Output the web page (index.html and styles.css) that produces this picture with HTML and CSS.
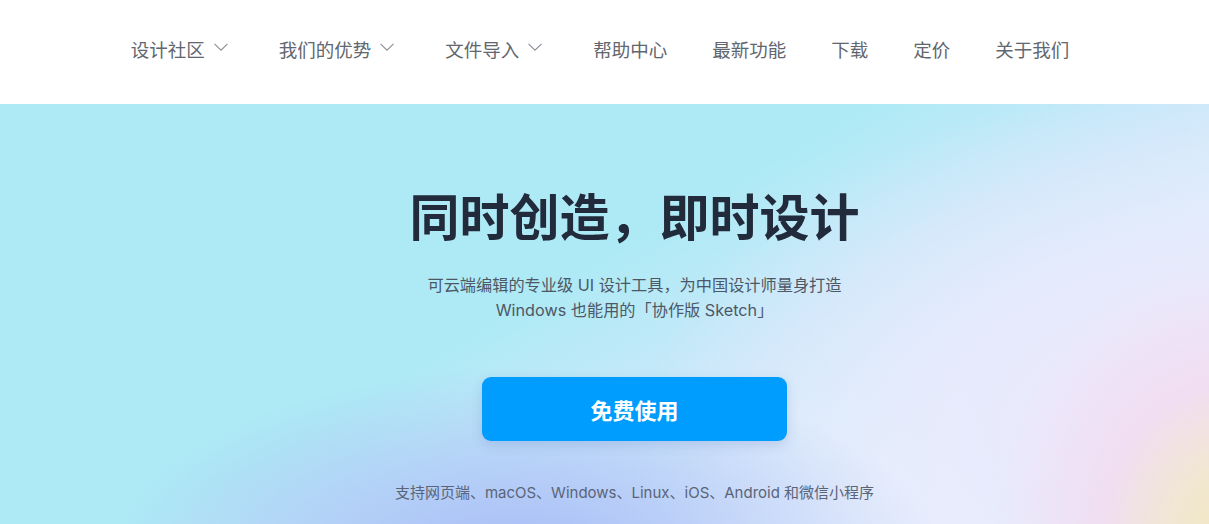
FILE: index.html
```html
<!DOCTYPE html>
<html lang="zh-CN">
<head>
<meta charset="utf-8">
<title>即时设计</title>
<link rel="stylesheet" href="styles.css">
</head>
<body>
<header class="header">
  <nav class="nav">
    <a class="nav-item" href="#">设计社区<svg class="chev" viewBox="0 0 14 8" width="14" height="8"><path d="M0.5 0.8 L7 7.2 L13.5 0.8" fill="none" stroke="#8a8f99" stroke-width="1.1"/></svg></a>
    <a class="nav-item" href="#">我们的优势<svg class="chev" viewBox="0 0 14 8" width="14" height="8"><path d="M0.5 0.8 L7 7.2 L13.5 0.8" fill="none" stroke="#8a8f99" stroke-width="1.1"/></svg></a>
    <a class="nav-item" href="#">文件导入<svg class="chev" viewBox="0 0 14 8" width="14" height="8"><path d="M0.5 0.8 L7 7.2 L13.5 0.8" fill="none" stroke="#8a8f99" stroke-width="1.1"/></svg></a>
    <a class="nav-item" href="#">帮助中心</a>
    <a class="nav-item" href="#">最新功能</a>
    <a class="nav-item" href="#">下载</a>
    <a class="nav-item" href="#">定价</a>
    <a class="nav-item" href="#">关于我们</a>
  </nav>
</header>
<main class="hero">
  <h1 class="title">同时创造，即时设计</h1>
  <p class="subtitle">可云端编辑的专业级 UI 设计工具，为中国设计师量身打造<br>Windows 也能用的「协作版 Sketch」</p>
  <a class="cta" href="#">免费使用</a>
  <p class="platforms">支持网页端、macOS、Windows、Linux、iOS、Android 和微信小程序</p>
</main>
</body>
</html>
```

FILE: styles.css
```css
* { box-sizing: border-box; }
html, body { margin: 0; padding: 0; }
body {
  font-family: Inter, "Noto Sans CJK SC", sans-serif;
  background: #fff;
  height: 524px;
  overflow: hidden;
}
.header {
  height: 104px;
  background: #fff;
  display: flex;
  align-items: center;
  justify-content: center;
}
.nav {
  display: flex;
  align-items: center;
  gap: 45px;
  margin-left: -9px;
  margin-top: -6px;
}
.nav-item {
  display: flex;
  align-items: center;
  font-family: "Noto Sans CJK SC", sans-serif;
  font-size: 18.5px;
  color: #62666e;
  text-decoration: none;
  line-height: 26px;
}
.chev {
  margin-left: 9px;
  margin-right: 6px;
  margin-top: -4px;
}
.hero {
  height: 420px;
  display: flex;
  flex-direction: column;
  align-items: center;
  padding-top: 78px;
  padding-left: 60px;
  background:
    radial-gradient(ellipse 240px 280px at 102% 103%, #f3e6bf 0%, rgba(243,230,191,0.7) 25%, rgba(245,214,236,0.6) 55%, rgba(245,214,236,0) 100%),
    radial-gradient(ellipse 420px 190px at 43% 108%, rgba(164,185,246,0.95) 0%, rgba(170,190,246,0.6) 45%, rgba(170,190,246,0) 100%),
    radial-gradient(ellipse 700px 420px at 100% 75%, rgba(238,232,252,1) 0%, rgba(232,234,252,0.9) 35%, rgba(232,234,252,0) 80%),
    linear-gradient(150deg, #aeeaf5 0%, #aeeaf5 45%, #cbe8fa 62%, #e4f2fc 80%, #eef0fc 100%);
}
.title {
  margin: 0;
  font-family: "Noto Sans CJK SC", sans-serif;
  font-size: 50px;
  font-weight: 700;
  line-height: 64px;
  color: #222b3b;
}
.subtitle {
  margin: 27px 0 0;
  font-size: 16.2px;
  line-height: 25px;
  color: #4d5766;
  text-align: center;
}
.cta {
  margin-top: 54px;
  width: 305px;
  height: 64px;
  border-radius: 9px;
  background: #009dff;
  color: #fff;
  font-family: "Noto Sans CJK SC", sans-serif;
  font-weight: 700;
  font-size: 22px;
  display: flex;
  align-items: center;
  justify-content: center;
  text-decoration: none;
  box-shadow: 0 4px 12px rgba(60, 90, 160, 0.18);
}
.platforms {
  margin: 42px 0 0;
  font-size: 15px;
  line-height: 20px;
  color: #5a6478;
}
```
